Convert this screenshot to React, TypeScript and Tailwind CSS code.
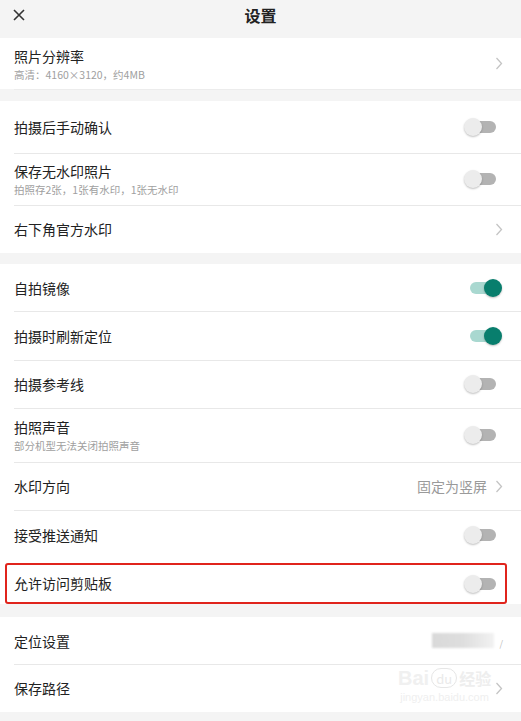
import React from 'react';

const font = { fontFamily: '"Noto Sans CJK SC", "Noto Sans", sans-serif' };

function Chevron() {
  return (
    <svg width="8" height="13" viewBox="0 0 8 13" className="shrink-0">
      <path d="M1.5 1 L6.5 6.5 L1.5 12" fill="none" stroke="#c4c4c4" strokeWidth="1.3" />
    </svg>
  );
}

function Toggle({ on }: { on?: boolean }) {
  if (on) {
    return (
      <div className="relative w-[32px] h-[18px] shrink-0">
        <div className="absolute left-0 top-[3px] w-[26px] h-[12px] rounded-full bg-[#a9d8d0]" />
        <div className="absolute right-0 top-0 w-[18px] h-[18px] rounded-full bg-[#087e6d] shadow-[0_1px_2px_rgba(0,0,0,0.25)]" />
      </div>
    );
  }
  return (
    <div className="relative w-[32px] h-[18px] shrink-0">
      <div className="absolute right-0 top-[3px] w-[26px] h-[12px] rounded-full bg-[#b3b3b3]" />
      <div className="absolute left-0 top-0 w-[18px] h-[18px] rounded-full bg-[#ececec] shadow-[0_1px_2px_rgba(0,0,0,0.25)]" />
    </div>
  );
}

interface RowProps {
  label: string;
  sub?: string;
  h: string;
  divider?: boolean;
  right: React.ReactNode;
  rightPad?: string;
}

function Row({ label, sub, h, divider = true, right, rightPad = 'pr-[18px]' }: RowProps) {
  return (
    <div className={`relative ${h}`}>
      {divider && <div className="absolute top-0 left-[14px] right-0 h-px bg-[#e8e8e8]" />}
      <div className={`h-full flex items-center justify-between pl-[14px] ${rightPad}`}>
        <div className="flex flex-col">
          <span className="text-[14px] leading-[20px] text-[#222]">{label}</span>
          {sub && <span className="text-[10.5px] leading-[15px] mt-[1px] text-[#a0a0a0]">{sub}</span>}
        </div>
        {right}
      </div>
    </div>
  );
}

export default function App() {
  return (
    <div className="w-[521px] h-[721px] bg-[#f4f4f4] overflow-hidden relative" style={font}>
      {/* header */}
      <div className="h-[38px] relative flex items-start justify-center pt-[6px]">
        <svg width="12" height="12" viewBox="0 0 12 12" className="absolute left-[13px] top-[9px]">
          <path d="M1 1 L11 11 M11 1 L1 11" stroke="#333" strokeWidth="1.6" />
        </svg>
        <span className="text-[16px] font-bold text-[#222] leading-[18px]">设置</span>
      </div>

      {/* section 1 */}
      <div className="bg-white">
        <Row label="照片分辨率" sub="高清：4160×3120，约4MB" h="h-[51px]" divider={false} right={<Chevron />} />
      </div>
      <div className="h-px ml-[14px] bg-[#ececec]" />

      {/* section 2 */}
      <div className="bg-white mt-[11px]">
        <Row label="拍摄后手动确认" h="h-[52px]" divider={false} rightPad="pr-[25px]" right={<Toggle />} />
        <Row label="保存无水印照片" sub="拍照存2张，1张有水印，1张无水印" h="h-[52px]" rightPad="pr-[25px]" right={<Toggle />} />
        <Row label="右下角官方水印" h="h-[48px]" right={<Chevron />} />
      </div>

      {/* section 3 */}
      <div className="bg-white mt-[11px]">
        <Row label="自拍镜像" h="h-[47px]" divider={false} rightPad="pr-[19px]" right={<Toggle on />} />
        <Row label="拍摄时刷新定位" h="h-[49px]" rightPad="pr-[19px]" right={<Toggle on />} />
        <Row label="拍摄参考线" h="h-[48px]" rightPad="pr-[25px]" right={<Toggle />} />
        <Row label="拍照声音" sub="部分机型无法关闭拍照声音" h="h-[54px]" rightPad="pr-[25px]" right={<Toggle />} />
        <Row
          label="水印方向"
          h="h-[48px]"
          right={
            <div className="flex items-center gap-[8px]">
              <span className="text-[14px] text-[#9a9a9a]">固定为竖屏</span>
              <Chevron />
            </div>
          }
        />
        <Row label="接受推送通知" h="h-[49px]" rightPad="pr-[25px]" right={<Toggle />} />
        <div className="relative h-[45px]">
          <div className="absolute left-[5px] top-[4px] w-[502px] bottom-0 border-2 border-[#e0241c] rounded-[3px]" />
          <div className="h-full pt-[4px] flex items-center justify-between pl-[14px] pr-[25px]">
            <span className="text-[14px] leading-[19px] text-[#222]">允许访问剪贴板</span>
            <Toggle />
          </div>
        </div>
      </div>

      {/* section 4 */}
      <div className="bg-white mt-[13px]">
        <Row
          label="定位设置"
          h="h-[47px]"
          divider={false}
          right={
            <div className="flex items-end gap-[5px]">
              <div className="w-[62px] h-[15px] bg-gradient-to-r from-[#d9d9d9] via-[#dedede] to-[#f2f2f2] blur-[1px]" />
              <span className="text-[9px] leading-none text-[#bbb]">/</span>
            </div>
          }
        />
        <Row label="保存路径" h="h-[48px]" right={<Chevron />} />
      </div>

      {/* watermark overlay */}
      <div className="absolute left-[398px] top-[668px] flex flex-col items-center pointer-events-none select-none">
        <div className="flex items-center gap-[2px] leading-none">
          <span className="text-[20px] font-bold text-[#f0f0f0]" style={{ fontFamily: '"Liberation Sans", sans-serif' }}>Bai</span>
          <span className="w-[26px] h-[20px] rounded-full border border-[#e6e6e6] text-[13px] text-[#eaeaea] flex items-center justify-center">du</span>
          <span className="text-[16px] font-bold text-[#eeeeee]">经验</span>
        </div>
        <span className="text-[11px] text-[#efefef] leading-none mt-[4px]" style={{ fontFamily: '"Liberation Sans", sans-serif' }}>jingyan.baidu.com</span>
      </div>
    </div>
  );
}
